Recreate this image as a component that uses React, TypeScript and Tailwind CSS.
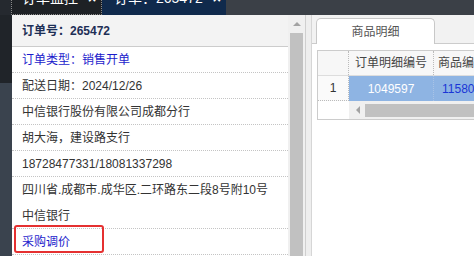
import React from 'react';

type Row = { text: string; blue?: boolean; noLine?: boolean };

const rows: Row[] = [
  { text: '订单类型：销售开单', blue: true },
  { text: '配送日期：2024/12/26' },
  { text: '中信银行股份有限公司成都分行' },
  { text: '胡大海，建设路支行' },
  { text: '18728477331/18081337298' },
  { text: '四川省.成都市.成华区.二环路东二段8号附10号', noLine: true },
  { text: '中信银行' },
  { text: '采购调价', blue: true },
];

const App: React.FC = () => {
  return (
    <div className="w-[474px] h-[256px] overflow-hidden flex flex-col bg-white font-['Liberation_Sans','Noto_Sans_CJK_SC',sans-serif]">
      {/* top tab bar, text cut off at the top */}
      <div className="h-[15px] flex bg-[#3b4047] overflow-hidden shrink-0">
        <div className="w-[11px] bg-[#25292f]" />
        <div className="w-[91px] bg-[#1e2125] border border-t-0 border-dotted border-[#8a8a8a] flex items-start pl-[10px] gap-[10px] text-white text-[14px]">
          <span className="-mt-[10px] leading-[16px]">订单监控</span>
          <span className="-mt-[10px] leading-[16px] font-bold">×</span>
        </div>
        <div className="w-[124px] bg-[#102a4c] flex items-start pl-[12px] gap-[10px] text-white text-[14px]">
          <span className="-mt-[10px] leading-[16px]">订单：265472</span>
          <span className="-mt-[10px] leading-[16px] font-bold">×</span>
        </div>
      </div>

      <div className="flex flex-1 min-h-0">
        {/* left sidebar strip */}
        <div className="w-[12px] flex flex-col">
          <div className="h-[68px] bg-[#202429]" />
          <div className="flex-1 bg-[#3a434e]" />
        </div>

        {/* order info panel */}
        <div className="w-[276px] relative bg-white flex flex-col text-[12px]">
          <div className="h-[32px] bg-[#f3f3f3] border-b border-[#cccccc] flex items-center pl-[10px] font-bold text-[#1e2f56]">
            订单号：265472
          </div>
          {rows.map((r, i) => (
            <div
              key={i}
              className={`h-[26px] flex items-center pl-[10px] ${r.noLine ? '' : 'border-b border-dotted border-[#c4c4c4]'} ${r.blue ? 'text-[#1c1ccc]' : 'text-[#333333]'}`}
            >
              {r.text}
            </div>
          ))}
          <div className="absolute left-[2px] top-[210px] w-[90px] h-[28px] border-2 border-[#e53030] rounded-[3px]" />
        </div>

        {/* vertical scrollbar */}
        <div className="w-[17px] bg-[#f0f0f0] flex flex-col">
          <div className="h-[18px] flex items-center justify-center">
            <div className="w-0 h-0 border-l-[4px] border-r-[4px] border-b-[4px] border-l-transparent border-r-transparent border-b-[#a3a3a3]" />
          </div>
          <div className="flex-1 ml-[2px] w-[13px] bg-[#c1c1c1]" />
        </div>

        {/* splitter */}
        <div className="w-[6px] bg-[#eeeeee] border-l border-[#cfcfcf]" />

        {/* right panel */}
        <div className="flex-1 min-w-0 overflow-hidden border-l border-[#d6d6d6] bg-white flex flex-col">
          <div className="h-[29px] bg-[#f2f2f2] border-b border-[#cccccc] flex items-end pl-[4px] shrink-0">
            <div className="w-[119px] h-[26px] -mb-px bg-white border border-b-0 border-[#c8c8c8] rounded-t-[5px] flex items-center justify-center text-[12px] text-[#555555]">
              商品明细
            </div>
          </div>
          <div className="pl-[5px] pt-[6px]">
            <div className="w-[220px] border border-[#cccccc] text-[12px]">
              <div className="h-[25px] flex bg-[#f7f7f7] border-b border-[#dddddd]">
                <div className="w-[31px] border-r border-dotted border-[#bbbbbb]" />
                <div className="w-[85px] border-r border-dotted border-[#bbbbbb] flex items-center justify-center text-[#444444]">
                  订单明细编号
                </div>
                <div className="flex-1 flex items-center pl-[4px] text-[#444444] whitespace-nowrap">商品编号</div>
              </div>
              <div className="h-[25px] flex">
                <div className="w-[31px] bg-[#fafafa] border-r border-b border-dotted border-[#bbbbbb] flex items-center justify-center text-[#333333]">
                  1
                </div>
                <div className="w-[85px] bg-[#8eb4e3] border-r border-dotted border-[#a9c3e6] flex items-center justify-center text-white">
                  1049597
                </div>
                <div className="flex-1 bg-[#8eb4e3] flex items-center pl-[8px] text-[#1a36d6]">1158051</div>
              </div>
              <div className="h-[18px] flex">
                <div className="w-[31px] bg-white" />
                <div className="flex-1 bg-[#f0f0f0] flex items-center pl-[7px] gap-[5px]">
                  <div className="w-0 h-0 border-t-[4px] border-b-[4px] border-r-[4px] border-t-transparent border-b-transparent border-r-[#a3a3a3]" />
                  <div className="flex-1 h-[13px] bg-[#c1c1c1]" />
                </div>
              </div>
            </div>
          </div>
        </div>
      </div>
    </div>
  );
};

export default App;
